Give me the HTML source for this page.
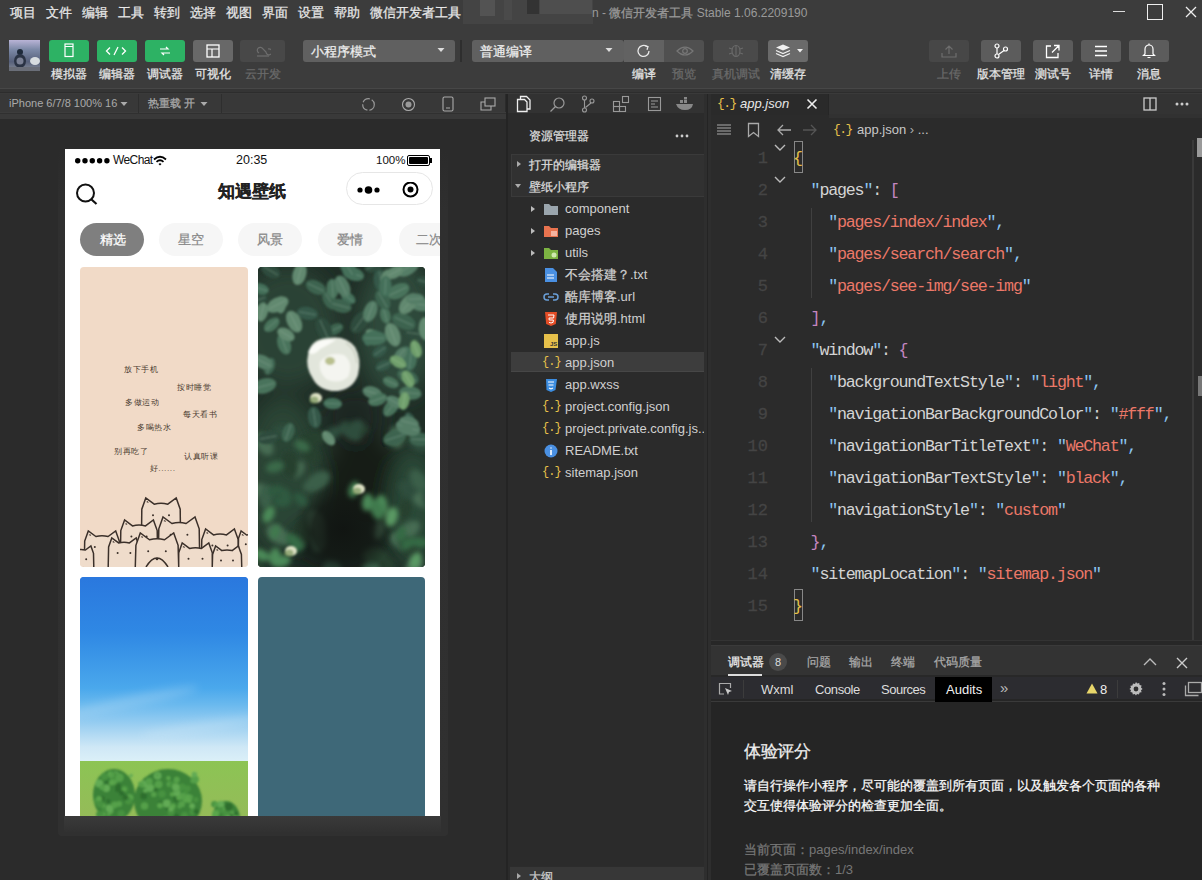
<!DOCTYPE html>
<html><head><meta charset="utf-8">
<style>
*{box-sizing:border-box;margin:0;padding:0}
html,body{width:1202px;height:880px;overflow:hidden;background:#2b2b2b;font-family:"Liberation Sans",sans-serif;}
.a{position:absolute}
.t{position:absolute;white-space:nowrap;line-height:1}
#menubar{left:0;top:0;width:1202px;height:88px;background:#3c3c3c}
.menu{top:6px;font-size:13px;color:#e8e8e8}
.btn{top:40px;height:22px;border-radius:3px;background:#5c5c5c}
.g{background:#2db264}
.lbl{top:68px;font-size:12px;color:#e6e6e6;text-align:center;width:60px}
.dim{color:#6a6a6a}
#simbar{left:0;top:94px;width:505px;height:25px;background:#383838}
#sim{left:0;top:119px;width:509px;height:761px;background:#2b2b2b}
#exp{left:509px;top:94px;width:195px;height:786px;background:#2b2b2b}
#ed{left:711px;top:94px;width:491px;height:551px;background:#2b2b2b}
.code{font-family:"Liberation Mono",monospace;font-size:16.6667px;letter-spacing:-1.2px;color:#d4d4d4}
.ln{font-family:"Liberation Mono",monospace;font-size:17px;color:#444;text-align:right;width:30px;-webkit-text-stroke:0.3px #444}
.b{color:#8cc4f0}
.s{color:#ec7868}
.q{color:#d4d4d4}
.tree{font-size:13px;color:#d0d0d0}
.c{display:inline-block;width:1em;text-align:center;font-style:normal;-webkit-text-stroke:0.25px currentColor}
.pk .c{width:calc(1em + 1px);-webkit-text-stroke:0}
.nocjk .c{position:relative;-webkit-text-fill-color:transparent;-webkit-text-stroke:0}
.nocjk .c::after{content:"";position:absolute;left:.1em;right:.1em;top:.12em;height:.8em;opacity:.85;--w:.09em;background:linear-gradient(currentColor,currentColor) 0 8%/100% var(--w) no-repeat,linear-gradient(currentColor,currentColor) 0 50%/100% var(--w) no-repeat,linear-gradient(currentColor,currentColor) 0 95%/100% var(--w) no-repeat,linear-gradient(currentColor,currentColor) 20% 0/var(--w) 100% no-repeat,linear-gradient(currentColor,currentColor) 75% 0/var(--w) 100% no-repeat}
.nocjk [style*="font-weight:bold"] .c::after{--w:.14em}
.nocjk .c.p::after{left:.15em;right:auto;width:.15em;top:.7em;height:.2em;background:currentColor}
</style></head><body>
<!-- top menubar + toolbar -->
<div class="a" id="menubar"></div>
<div class="t menu" style="left:10px"><i class="c">项</i><i class="c">目</i></div>
<div class="t menu" style="left:46px"><i class="c">文</i><i class="c">件</i></div>
<div class="t menu" style="left:82px"><i class="c">编</i><i class="c">辑</i></div>
<div class="t menu" style="left:118px"><i class="c">工</i><i class="c">具</i></div>
<div class="t menu" style="left:154px"><i class="c">转</i><i class="c">到</i></div>
<div class="t menu" style="left:190px"><i class="c">选</i><i class="c">择</i></div>
<div class="t menu" style="left:226px"><i class="c">视</i><i class="c">图</i></div>
<div class="t menu" style="left:262px"><i class="c">界</i><i class="c">面</i></div>
<div class="t menu" style="left:298px"><i class="c">设</i><i class="c">置</i></div>
<div class="t menu" style="left:334px"><i class="c">帮</i><i class="c">助</i></div>
<div class="t menu" style="left:370px"><i class="c">微</i><i class="c">信</i><i class="c">开</i><i class="c">发</i><i class="c">者</i><i class="c">工</i><i class="c">具</i></div>

<!-- blurred area -->
<div class="a" style="left:463px;top:0;width:130px;height:24px;background:#444"></div>
<div class="a" style="left:480px;top:0;width:15px;height:16px;background:#535353"></div><div class="a" style="left:504px;top:0;width:8px;height:20px;background:#4a4a4a"></div>
<div class="a" style="left:527px;top:0;width:12px;height:14px;background:#333"></div>
<div class="a" style="left:540px;top:0;width:52px;height:14px;background:#4e4e4e"></div>
<div class="t" style="left:592px;top:7px;font-size:12px;color:#9a9a9a">n - <i class="c">微</i><i class="c">信</i><i class="c">开</i><i class="c">发</i><i class="c">者</i><i class="c">工</i><i class="c">具</i> Stable 1.06.2209190</div>

<!-- window controls -->
<div class="a" style="left:1113px;top:11px;width:12px;height:1px;background:#ddd"></div>
<div class="a" style="left:1147px;top:4px;width:16px;height:16px;border:1.5px solid #eee"></div>
<svg class="a" style="left:1184px;top:5px" width="14" height="14"><path d="M2 2L12 12M12 2L2 12" stroke="#eee" stroke-width="1.3"/></svg>

<!-- toolbar -->
<svg class="a" style="left:9px;top:40px" width="31" height="31" viewBox="0 0 31 31"><defs><linearGradient id="av" x1="0" y1="0" x2="0" y2="1"><stop offset="0" stop-color="#b9b4d6"/><stop offset="0.3" stop-color="#7d8aa8"/><stop offset="0.7" stop-color="#56607a"/><stop offset="1" stop-color="#8a8f9a"/></linearGradient></defs><rect width="31" height="31" fill="url(#av)"/><circle cx="11" cy="12" r="3" fill="#1e2a3a"/><ellipse cx="11" cy="21" rx="6" ry="7" fill="#2a3344"/><circle cx="11" cy="21" r="3.5" fill="#7a8094"/><ellipse cx="26" cy="21" rx="5" ry="4" fill="#d8dde0"/><rect x="0" y="27" width="31" height="4" fill="#6a6e78"/></svg>
<div class="a btn g" style="left:49px;width:40px"></div>
<div class="a btn g" style="left:97px;width:40px"></div>
<div class="a btn g" style="left:145px;width:40px"></div>
<div class="a btn" style="left:193px;width:40px;background:#686868"></div>
<div class="a btn" style="left:240px;width:45px;background:#484848"></div>
<svg class="a" style="left:64px;top:43px" width="10" height="15"><rect x="1" y="1" width="8" height="12.5" stroke="#fff" stroke-width="1.2" fill="none"/><path d="M1 3.5h8" stroke="#fff" stroke-width="1"/></svg>
<svg class="a" style="left:105px;top:46px" width="22" height="10"><path d="M5 1.5L1.5 5 5 8.5M17 1.5L20.5 5 17 8.5M13 1L9 9" stroke="#fff" stroke-width="1.3" fill="none"/></svg>
<svg class="a" style="left:159px;top:46px" width="12" height="10"><path d="M1 3h8l-2-2M11 7H3l2 2" stroke="#fff" stroke-width="1.2" fill="none"/></svg>
<svg class="a" style="left:206px;top:44px" width="14" height="14"><rect x="1" y="1" width="12" height="12" stroke="#fff" stroke-width="1.3" fill="none"/><path d="M1 5h12M6 5v8" stroke="#fff" stroke-width="1.2"/></svg>
<svg class="a" style="left:255px;top:44px" width="16" height="14"><path d="M4 9a3 3 0 1 1 4-4l3 3a3 3 0 1 0 2-3" stroke="#6e6e6e" stroke-width="1.2" fill="none"/><path d="M2 12h12" stroke="#6e6e6e" stroke-width="1.2"/></svg>
<div class="t lbl" style="left:39px"><i class="c">模</i><i class="c">拟</i><i class="c">器</i></div>
<div class="t lbl" style="left:87px"><i class="c">编</i><i class="c">辑</i><i class="c">器</i></div>
<div class="t lbl" style="left:135px"><i class="c">调</i><i class="c">试</i><i class="c">器</i></div>
<div class="t lbl" style="left:183px"><i class="c">可</i><i class="c">视</i><i class="c">化</i></div>
<div class="t lbl dim" style="left:233px"><i class="c">云</i><i class="c">开</i><i class="c">发</i></div>

<div class="a btn" style="left:303px;width:152px;background:#606060"></div>
<div class="t" style="left:311px;top:45px;font-size:13px;color:#eee"><i class="c">小</i><i class="c">程</i><i class="c">序</i><i class="c">模</i><i class="c">式</i></div>
<div class="a" style="left:460px;top:40px;width:2px;height:22px;background:#2e2e2e"></div>
<div class="a btn" style="left:472px;width:152px;background:#606060"></div>
<div class="t" style="left:480px;top:45px;font-size:13px;color:#eee"><i class="c">普</i><i class="c">通</i><i class="c">编</i><i class="c">译</i></div>
<div class="a btn" style="left:624px;width:40px;background:#626262;border-radius:0"></div>
<div class="a btn" style="left:664px;width:40px;background:#505050;border-radius:0 3px 3px 0"></div>
<div class="a btn" style="left:713px;width:45px;background:#4a4a4a"></div>
<div class="a btn" style="left:768px;width:40px;background:#6a6a6a"></div>
<div class="t lbl" style="left:614px"><i class="c">编</i><i class="c">译</i></div>
<div class="t lbl dim" style="left:654px"><i class="c">预</i><i class="c">览</i></div>
<div class="t lbl dim" style="left:706px"><i class="c">真</i><i class="c">机</i><i class="c">调</i><i class="c">试</i></div>
<div class="t lbl" style="left:758px"><i class="c">清</i><i class="c">缓</i><i class="c">存</i></div>

<div class="a btn" style="left:929px;width:40px;background:#474747"></div>
<div class="a btn" style="left:981px;width:40px"></div>
<div class="a btn" style="left:1033px;width:40px"></div>
<div class="a btn" style="left:1081px;width:40px"></div>
<div class="a btn" style="left:1129px;width:40px"></div>
<div class="t lbl dim" style="left:919px"><i class="c">上</i><i class="c">传</i></div>
<div class="t lbl" style="left:971px"><i class="c">版</i><i class="c">本</i><i class="c">管</i><i class="c">理</i></div>
<div class="t lbl" style="left:1023px"><i class="c">测</i><i class="c">试</i><i class="c">号</i></div>
<div class="t lbl" style="left:1071px"><i class="c">详</i><i class="c">情</i></div>
<div class="t lbl" style="left:1119px"><i class="c">消</i><i class="c">息</i></div>

<svg class="a" style="left:437px;top:47px" width="8" height="6"><path d="M0.5 1h7L4 5z" fill="#ddd"/></svg>
<svg class="a" style="left:605px;top:47px" width="8" height="6"><path d="M0.5 1h7L4 5z" fill="#ddd"/></svg>
<svg class="a" style="left:636px;top:43px" width="16" height="16"><path d="M13 8a5.5 5.5 0 1 1-2-4.3" stroke="#e8e8e8" stroke-width="1.3" fill="none"/><path d="M9 2.5l3 1.2-1 3" stroke="#e8e8e8" stroke-width="1.3" fill="none"/></svg>
<svg class="a" style="left:676px;top:45px" width="18" height="12"><path d="M1 6q8-8 16 0q-8 8-16 0z" stroke="#777" stroke-width="1.2" fill="none"/><circle cx="9" cy="6" r="2.3" stroke="#777" stroke-width="1.2" fill="none"/></svg>
<svg class="a" style="left:728px;top:44px" width="16" height="14"><ellipse cx="8" cy="7" rx="4" ry="5.5" stroke="#6a6a6a" stroke-width="1.2" fill="none"/><path d="M1 4l3 1M1 10l3-1M15 4l-3 1M15 10l-3-1M8 2v10" stroke="#6a6a6a" stroke-width="1.1"/></svg>
<svg class="a" style="left:775px;top:43px" width="30" height="16"><path d="M8 1.5l7 3-7 3-7-3z" fill="#f0f0f0"/><path d="M1 7.5l7 3 7-3M1 10.5l7 3 7-3" stroke="#f0f0f0" stroke-width="1.3" fill="none"/><path d="M22 6h6l-3 3.5z" fill="#eee"/></svg>
<svg class="a" style="left:941px;top:44px" width="16" height="14"><path d="M8 10V2M4.5 5.5L8 2l3.5 3.5M1 9v4h14V9" stroke="#6e6e6e" stroke-width="1.2" fill="none"/></svg>
<svg class="a" style="left:993px;top:43px" width="16" height="16"><circle cx="4" cy="3" r="2" stroke="#fff" stroke-width="1.2" fill="none"/><circle cx="4" cy="13" r="2" stroke="#fff" stroke-width="1.2" fill="none"/><circle cx="12.5" cy="6" r="2" stroke="#fff" stroke-width="1.2" fill="none"/><path d="M4 5v6M11 7.5L5.5 11.5" stroke="#fff" stroke-width="1.2" fill="none"/></svg>
<svg class="a" style="left:1045px;top:44px" width="16" height="15"><path d="M6 2H1.5v11.5H13V9M9 1.5h5v5M14 1.5L7 8.5" stroke="#fff" stroke-width="1.3" fill="none"/></svg>
<svg class="a" style="left:1094px;top:45px" width="14" height="12"><path d="M1 1.5h12M1 6h12M1 10.5h12" stroke="#fff" stroke-width="1.3"/></svg>
<svg class="a" style="left:1142px;top:42px" width="14" height="17"><path d="M3 12V7a4 4 0 0 1 8 0v5l1.5 1.5h-11z" stroke="#fff" stroke-width="1.2" fill="none"/><path d="M7 1.5v1.5M5.5 15.5h3" stroke="#fff" stroke-width="1.2"/></svg>
<!-- simulator toolbar -->
<div class="a" style="left:0;top:88px;width:1202px;height:1px;background:#474747"></div><div class="a" style="left:0;top:89px;width:1202px;height:3px;background:#353535"></div><div class="a" style="left:0;top:92px;width:1202px;height:1px;background:#2d2d2d"></div><div class="a" style="left:0;top:93px;width:1202px;height:1px;background:#3a3a3a"></div><div class="a" id="simbar"></div><div class="a" style="left:0;top:112px;width:506px;height:1px;background:#3c3c3c"></div><div class="a" style="left:0;top:113px;width:506px;height:1px;background:#303030"></div><div class="a" style="left:0;top:114px;width:506px;height:5px;background:#393939"></div>
<div class="t" style="left:9px;top:98px;font-size:11px;color:#aaa">iPhone 6/7/8 100% 16</div><svg class="a" style="left:120px;top:101px" width="8" height="6"><path d="M0.5 1h7L4 5z" fill="#aaa"/></svg>
<div class="a" style="left:138px;top:94px;width:1px;height:19px;background:#2e2e2e"></div>
<div class="t" style="left:148px;top:98px;font-size:11px;color:#aaa"><i class="c">热</i><i class="c">重</i><i class="c">载</i> <i class="c">开</i></div><svg class="a" style="left:200px;top:101px" width="8" height="6"><path d="M0.5 1h7L4 5z" fill="#aaa"/></svg>
<div class="a" style="left:221px;top:94px;width:1px;height:19px;background:#2e2e2e"></div>

<div class="a" id="sim"></div>
<svg class="a" style="left:361px;top:97px" width="15" height="15"><circle cx="7.5" cy="7.5" r="5.8" stroke="#999" stroke-width="1.2" fill="none" stroke-dasharray="8 2"/></svg>
<svg class="a" style="left:401px;top:97px" width="15" height="15"><circle cx="7.5" cy="7.5" r="6" stroke="#aaa" stroke-width="1.1" fill="none"/><circle cx="7.5" cy="7.5" r="3" fill="#999"/></svg>
<svg class="a" style="left:442px;top:96px" width="12" height="16"><rect x="1" y="1" width="10" height="14" rx="1.5" stroke="#aaa" stroke-width="1.1" fill="none"/><path d="M4 12h4" stroke="#aaa"/></svg>
<svg class="a" style="left:480px;top:97px" width="16" height="15"><rect x="5" y="1" width="10" height="8" stroke="#aaa" stroke-width="1.1" fill="none"/><path d="M5 5H1v8h10v-4" stroke="#aaa" stroke-width="1.1" fill="none"/></svg>
<div class="a" style="left:506px;top:94px;width:2px;height:786px;background:#242424"></div>
<!-- phone shadow -->
<div class="a" style="left:58px;top:150px;width:390px;height:686px;background:linear-gradient(#2b2b2b,#2f2f2f 60px,#303030);border-radius:4px"></div>
<div class="a" style="left:64px;top:816px;width:377px;height:16px;background:linear-gradient(#3a3a3a,#313131)"></div>
<!-- phone -->
<div class="a" id="phone" style="left:65px;top:149px;width:375px;height:667px;background:#fff;overflow:hidden">
  <svg class="a" style="left:10px;top:8px" width="36" height="8" viewBox="0 0 36 8"><circle cx="2.7" cy="3.7" r="2.7"/><circle cx="10" cy="3.7" r="2.7"/><circle cx="17.3" cy="3.7" r="2.7"/><circle cx="24.6" cy="3.7" r="2.7"/><circle cx="31.9" cy="3.7" r="2.7"/></svg>
  <div class="t" style="left:48px;top:5px;font-size:12px;color:#111;letter-spacing:-0.6px">WeChat</div>
  <svg class="a" style="left:88px;top:6px" width="14" height="11" viewBox="0 0 14 11"><path d="M1 4.5Q7 -1 13 4.5" stroke="#000" stroke-width="1.8" fill="none"/><path d="M3.5 6.8Q7 3.6 10.5 6.8" stroke="#000" stroke-width="1.8" fill="none"/><path d="M5.5 9L7 10.5L8.5 9Q7 7.7 5.5 9Z" fill="#000"/></svg>
  <div class="t" style="left:171px;top:5px;font-size:12.5px;color:#111">20:35</div>
  <div class="t" style="left:311px;top:6px;font-size:11.5px;color:#111">100%</div>
  <div class="a" style="left:342px;top:6px;width:23px;height:11px;border:1px solid #000;border-radius:2px;padding:1px"><div style="width:100%;height:100%;background:#000;border-radius:1px"></div></div>
  <div class="a" style="left:365px;top:9px;width:2px;height:5px;background:#000"></div>
  <!-- nav -->
  <svg class="a" style="left:10px;top:34px" width="24" height="24" viewBox="0 0 24 24"><circle cx="10.5" cy="10" r="8.5" stroke="#111" stroke-width="2" fill="none"/><path d="M16.5 16.5L21.5 21" stroke="#111" stroke-width="2.2"/></svg>
  <div class="t" style="left:153px;top:34px;font-size:17px;font-weight:bold;color:#222"><i class="c">知</i><i class="c">遇</i><i class="c">壁</i><i class="c">纸</i></div>
  <div class="a" style="left:281px;top:23px;width:87px;height:33px;border:1px solid #e6e6e6;border-radius:17px"></div>
  <svg class="a" style="left:290px;top:33px" width="80" height="16" viewBox="0 0 80 16"><circle cx="5" cy="8" r="2.6" fill="#000"/><circle cx="13.5" cy="8" r="3.8" fill="#000"/><circle cx="22" cy="8" r="2.6" fill="#000"/><circle cx="55.5" cy="7.5" r="7" stroke="#000" stroke-width="2" fill="none"/><circle cx="55.5" cy="7.5" r="3" fill="#000"/></svg>
  <!-- tabs -->
  <div class="a" style="left:15px;top:74px;width:64px;height:33px;border-radius:17px;background:#7f7f7f"></div>
  <div class="t" style="left:35px;top:84px;font-size:13px;color:#fff"><i class="c">精</i><i class="c">选</i></div>
  <div class="a" style="left:94px;top:74px;width:64px;height:33px;border-radius:17px;background:#f6f6f6"></div>
  <div class="t" style="left:113px;top:84px;font-size:13px;color:#888"><i class="c">星</i><i class="c">空</i></div>
  <div class="a" style="left:173px;top:74px;width:64px;height:33px;border-radius:17px;background:#f6f6f6"></div>
  <div class="t" style="left:192px;top:84px;font-size:13px;color:#888"><i class="c">风</i><i class="c">景</i></div>
  <div class="a" style="left:253px;top:74px;width:64px;height:33px;border-radius:17px;background:#f6f6f6"></div>
  <div class="t" style="left:272px;top:84px;font-size:13px;color:#888"><i class="c">爱</i><i class="c">情</i></div>
  <div class="a" style="left:334px;top:74px;width:64px;height:33px;border-radius:17px;background:#f6f6f6"></div>
  <div class="t" style="left:351px;top:84px;font-size:13px;color:#888"><i class="c">二</i><i class="c">次</i></div>
  <!-- img 1 peach -->
  <div class="a" id="im1" style="left:15px;top:118px;width:168px;height:300px;border-radius:4px;background:#f1dac7;overflow:hidden"><div class="t pk" style="left:44px;top:99px;font-size:7.5px;letter-spacing:1px;color:#4a3a30;font-family:'Liberation Serif',serif"><i class="c">放</i><i class="c">下</i><i class="c">手</i><i class="c">机</i></div><div class="t pk" style="left:97px;top:117px;font-size:7.5px;letter-spacing:1px;color:#4a3a30;font-family:'Liberation Serif',serif"><i class="c">按</i><i class="c">时</i><i class="c">睡</i><i class="c">觉</i></div><div class="t pk" style="left:45px;top:132px;font-size:7.5px;letter-spacing:1px;color:#4a3a30;font-family:'Liberation Serif',serif"><i class="c">多</i><i class="c">做</i><i class="c">运</i><i class="c">动</i></div><div class="t pk" style="left:103px;top:144px;font-size:7.5px;letter-spacing:1px;color:#4a3a30;font-family:'Liberation Serif',serif"><i class="c">每</i><i class="c">天</i><i class="c">看</i><i class="c">书</i></div><div class="t pk" style="left:57px;top:157px;font-size:7.5px;letter-spacing:1px;color:#4a3a30;font-family:'Liberation Serif',serif"><i class="c">多</i><i class="c">喝</i><i class="c">热</i><i class="c">水</i></div><div class="t pk" style="left:34px;top:181px;font-size:7.5px;letter-spacing:1px;color:#4a3a30;font-family:'Liberation Serif',serif"><i class="c">别</i><i class="c">再</i><i class="c">吃</i><i class="c">了</i></div><div class="t pk" style="left:104px;top:186px;font-size:7.5px;letter-spacing:1px;color:#4a3a30;font-family:'Liberation Serif',serif"><i class="c">认</i><i class="c">真</i><i class="c">听</i><i class="c">课</i></div><div class="t pk" style="left:70px;top:198px;font-size:7.5px;letter-spacing:1px;color:#4a3a30;font-family:'Liberation Serif',serif"><i class="c">好</i>......</div><svg width="168" height="300" viewBox="0 0 168 300" style="position:absolute;left:0;top:0"><path d="M61.0 310 L61.8 242.2 L65.8 231.0 L74.2 237.2 Q81.0 235.5 87.8 237.2 L96.2 231.0 L100.2 242.2 L101.0 310" fill="#efdccb" stroke="#3b302a" stroke-width="1.5"/><circle cx="73.0" cy="248.2" r="1" fill="#3b302a"/><circle cx="89.0" cy="248.2" r="1" fill="#3b302a"/><path d="M66.2 235.0l1.5 -1 1 2z" fill="#3b302a"/><path d="M40.0 310 L40.8 263.6 L44.6 253.0 L52.5 258.9 Q59.0 257.3 65.5 258.9 L73.4 253.0 L77.2 263.6 L78.0 310" fill="#efdccb" stroke="#3b302a" stroke-width="1.5"/><circle cx="51.4" cy="269.6" r="1" fill="#3b302a"/><circle cx="66.6" cy="269.6" r="1" fill="#3b302a"/><path d="M44.9 257.0l1.5 -1 1 2z" fill="#3b302a"/><path d="M78.0 310 L78.8 261.8 L83.0 250.0 L91.9 256.5 Q99.0 254.7 106.1 256.5 L115.0 250.0 L119.2 261.8 L120.0 310" fill="#efdccb" stroke="#3b302a" stroke-width="1.5"/><circle cx="90.6" cy="267.8" r="1" fill="#3b302a"/><circle cx="107.4" cy="267.8" r="1" fill="#3b302a"/><path d="M83.5 254.0l1.5 -1 1 2z" fill="#3b302a"/><path d="M4.0 310 L4.7 274.1 L8.3 264.0 L15.9 269.5 Q22.0 268.0 28.1 269.5 L35.7 264.0 L39.3 274.1 L40.0 310" fill="#efdccb" stroke="#3b302a" stroke-width="1.5"/><circle cx="14.8" cy="280.1" r="1" fill="#3b302a"/><circle cx="29.2" cy="280.1" r="1" fill="#3b302a"/><path d="M8.7 268.0l1.5 -1 1 2z" fill="#3b302a"/><path d="M121.0 310 L121.8 272.6 L125.6 262.0 L133.5 267.9 Q140.0 266.3 146.5 267.9 L154.4 262.0 L158.2 272.6 L159.0 310" fill="#efdccb" stroke="#3b302a" stroke-width="1.5"/><circle cx="132.4" cy="278.6" r="1" fill="#3b302a"/><circle cx="147.6" cy="278.6" r="1" fill="#3b302a"/><path d="M125.9 266.0l1.5 -1 1 2z" fill="#3b302a"/><path d="M158.0 310 L158.5 271.3 L161.1 264.0 L166.6 268.0 Q171.0 266.9 175.4 268.0 L180.9 264.0 L183.5 271.3 L184.0 310" fill="#efdccb" stroke="#3b302a" stroke-width="1.5"/><circle cx="165.8" cy="277.3" r="1" fill="#3b302a"/><circle cx="176.2" cy="277.3" r="1" fill="#3b302a"/><path d="M161.4 268.0l1.5 -1 1 2z" fill="#3b302a"/><path d="M-12.0 310 L-11.5 286.3 L-8.9 279.0 L-3.4 283.0 Q1.0 281.9 5.4 283.0 L10.9 279.0 L13.5 286.3 L14.0 310" fill="#efdccb" stroke="#3b302a" stroke-width="1.5"/><circle cx="-4.2" cy="292.3" r="1" fill="#3b302a"/><circle cx="6.2" cy="292.3" r="1" fill="#3b302a"/><path d="M-8.6 283.0l1.5 -1 1 2z" fill="#3b302a"/><path d="M28.0 310 L28.6 280.0 L31.8 271.0 L38.6 275.9 Q44.0 274.6 49.4 275.9 L56.2 271.0 L59.4 280.0 L60.0 310" fill="#efdccb" stroke="#3b302a" stroke-width="1.5"/><circle cx="37.6" cy="286.0" r="1" fill="#3b302a"/><circle cx="50.4" cy="286.0" r="1" fill="#3b302a"/><path d="M32.2 275.0l1.5 -1 1 2z" fill="#3b302a"/><path d="M98.0 310 L98.7 285.8 L102.2 276.0 L109.5 281.4 Q115.5 279.9 121.5 281.4 L128.8 276.0 L132.3 285.8 L133.0 310" fill="#efdccb" stroke="#3b302a" stroke-width="1.5"/><circle cx="108.5" cy="291.8" r="1" fill="#3b302a"/><circle cx="122.5" cy="291.8" r="1" fill="#3b302a"/><path d="M102.5 280.0l1.5 -1 1 2z" fill="#3b302a"/><path d="M132.0 310 L132.6 287.4 L135.6 279.0 L141.9 283.6 Q147.0 282.4 152.1 283.6 L158.4 279.0 L161.4 287.4 L162.0 310" fill="#efdccb" stroke="#3b302a" stroke-width="1.5"/><circle cx="141.0" cy="293.4" r="1" fill="#3b302a"/><circle cx="153.0" cy="293.4" r="1" fill="#3b302a"/><path d="M135.9 283.0l1.5 -1 1 2z" fill="#3b302a"/><path d="M55.0 310 L55.9 278.3 L60.3 266.0 L69.5 272.8 Q77.0 270.9 84.5 272.8 L93.7 266.0 L98.1 278.3 L99.0 310" fill="#efdccb" stroke="#3b302a" stroke-width="1.5"/><circle cx="68.2" cy="284.3" r="1" fill="#3b302a"/><circle cx="85.8" cy="284.3" r="1" fill="#3b302a"/><path d="M60.7 270.0l1.5 -1 1 2z" fill="#3b302a"/><path d="M66 300 Q77 282 88 300" fill="none" stroke="#3b302a" stroke-width="1.5"/><circle cx="77" cy="292" r="1.3" fill="#3b302a"/></svg></div>
  <!-- img 2 rose -->
  <div class="a" id="im2" style="left:193px;top:118px;width:167px;height:300px;border-radius:4px;background:#1f3526;overflow:hidden"><svg width="167" height="300" viewBox="0 0 167 300" style="position:absolute;left:0;top:0"><defs><filter id="bl2" x="-30%" y="-30%" width="160%" height="160%"><feGaussianBlur stdDeviation="2.6"/></filter><filter id="bl1" x="-10%" y="-10%" width="120%" height="120%"><feGaussianBlur stdDeviation="0.9"/></filter><filter id="bl5" x="-50%" y="-50%" width="200%" height="200%"><feGaussianBlur stdDeviation="10"/></filter></defs><rect width="167" height="300" fill="#1f2e26"/><g filter="url(#bl5)"><ellipse cx="30" cy="60" rx="50" ry="60" fill="#2b4236"/><ellipse cx="140" cy="60" rx="40" ry="70" fill="#2e4a3a"/><ellipse cx="25" cy="210" rx="40" ry="80" fill="#2a4434"/><ellipse cx="105" cy="220" rx="40" ry="55" fill="#141a16"/><ellipse cx="80" cy="280" rx="50" ry="30" fill="#18201b"/><ellipse cx="155" cy="240" rx="25" ry="60" fill="#2c4837"/><ellipse cx="95" cy="150" rx="30" ry="30" fill="#1c2620"/></g><g filter="url(#bl2)"><ellipse cx="151.9" cy="223.4" rx="12.6" ry="7.6" transform="rotate(34 151.9 223.4)" fill="#2f4e3c"/><ellipse cx="157.5" cy="299.8" rx="9.4" ry="5.7" transform="rotate(64 157.5 299.8)" fill="#3b5f48"/><ellipse cx="130.8" cy="300.5" rx="9.9" ry="6.0" transform="rotate(96 130.8 300.5)" fill="#27402f"/><ellipse cx="113.7" cy="301.4" rx="9.9" ry="5.9" transform="rotate(10 113.7 301.4)" fill="#3b5f48"/><ellipse cx="53.5" cy="217.4" rx="9.4" ry="5.6" transform="rotate(148 53.5 217.4)" fill="#3b5f48"/><ellipse cx="75.4" cy="299.9" rx="9.2" ry="5.5" transform="rotate(31 75.4 299.9)" fill="#3b5f48"/><ellipse cx="151.3" cy="263.1" rx="12.2" ry="7.3" transform="rotate(143 151.3 263.1)" fill="#466c52"/><ellipse cx="144.6" cy="274.5" rx="13.6" ry="8.2" transform="rotate(27 144.6 274.5)" fill="#466c52"/><ellipse cx="0.9" cy="304.9" rx="9.7" ry="5.8" transform="rotate(75 0.9 304.9)" fill="#3b5f48"/><ellipse cx="61.2" cy="271.9" rx="13.2" ry="7.9" transform="rotate(97 61.2 271.9)" fill="#3b5f48"/><ellipse cx="159.9" cy="175.0" rx="13.3" ry="8.0" transform="rotate(36 159.9 175.0)" fill="#2f4e3c"/><ellipse cx="40.1" cy="202.8" rx="9.1" ry="5.4" transform="rotate(120 40.1 202.8)" fill="#466c52"/><ellipse cx="160.7" cy="213.7" rx="12.2" ry="7.3" transform="rotate(58 160.7 213.7)" fill="#3b5f48"/><ellipse cx="92.9" cy="164.2" rx="12.7" ry="7.6" transform="rotate(38 92.9 164.2)" fill="#2f4e3c"/><ellipse cx="32.3" cy="197.5" rx="13.4" ry="8.0" transform="rotate(79 32.3 197.5)" fill="#27402f"/><ellipse cx="119.9" cy="262.8" rx="9.3" ry="5.6" transform="rotate(103 119.9 262.8)" fill="#466c52"/><ellipse cx="59.4" cy="256.1" rx="13.5" ry="8.1" transform="rotate(63 59.4 256.1)" fill="#466c52"/><ellipse cx="1.0" cy="301.2" rx="10.6" ry="6.3" transform="rotate(82 1.0 301.2)" fill="#27402f"/><ellipse cx="72.2" cy="301.9" rx="11.1" ry="6.7" transform="rotate(137 72.2 301.9)" fill="#2f4e3c"/><ellipse cx="150.8" cy="279.0" rx="12.4" ry="7.4" transform="rotate(40 150.8 279.0)" fill="#27402f"/><ellipse cx="59.6" cy="214.3" rx="14.0" ry="8.4" transform="rotate(145 59.6 214.3)" fill="#3b5f48"/><ellipse cx="6.3" cy="177.1" rx="12.6" ry="7.6" transform="rotate(58 6.3 177.1)" fill="#466c52"/><ellipse cx="-1.6" cy="223.1" rx="11.0" ry="6.6" transform="rotate(170 -1.6 223.1)" fill="#466c52"/><ellipse cx="24.9" cy="164.3" rx="10.5" ry="6.3" transform="rotate(1 24.9 164.3)" fill="#2f4e3c"/><ellipse cx="99.9" cy="160.8" rx="11.2" ry="6.7" transform="rotate(18 99.9 160.8)" fill="#27402f"/><ellipse cx="117.3" cy="288.6" rx="13.9" ry="8.3" transform="rotate(13 117.3 288.6)" fill="#27402f"/><ellipse cx="20.5" cy="268.0" rx="13.4" ry="8.1" transform="rotate(36 20.5 268.0)" fill="#466c52"/><ellipse cx="45.3" cy="265.8" rx="13.0" ry="7.8" transform="rotate(91 45.3 265.8)" fill="#27402f"/><ellipse cx="168.4" cy="233.4" rx="13.3" ry="8.0" transform="rotate(11 168.4 233.4)" fill="#466c52"/><ellipse cx="140.3" cy="171.8" rx="12.8" ry="7.7" transform="rotate(151 140.3 171.8)" fill="#27402f"/><ellipse cx="8.1" cy="229.3" rx="11.9" ry="7.2" transform="rotate(96 8.1 229.3)" fill="#3b5f48"/><ellipse cx="170.6" cy="230.9" rx="11.1" ry="6.6" transform="rotate(89 170.6 230.9)" fill="#2f4e3c"/><ellipse cx="97.2" cy="161.8" rx="10.4" ry="6.3" transform="rotate(126 97.2 161.8)" fill="#2f4e3c"/><ellipse cx="147.2" cy="242.6" rx="10.3" ry="6.2" transform="rotate(100 147.2 242.6)" fill="#27402f"/><ellipse cx="-3.8" cy="286.6" rx="11.6" ry="6.9" transform="rotate(80 -3.8 286.6)" fill="#27402f"/><ellipse cx="52.4" cy="185.5" rx="12.5" ry="7.5" transform="rotate(57 52.4 185.5)" fill="#27402f"/><ellipse cx="53.6" cy="171.9" rx="12.9" ry="7.7" transform="rotate(167 53.6 171.9)" fill="#27402f"/><ellipse cx="155.9" cy="299.3" rx="10.3" ry="6.2" transform="rotate(143 155.9 299.3)" fill="#466c52"/><ellipse cx="138.1" cy="170.1" rx="11.1" ry="6.6" transform="rotate(81 138.1 170.1)" fill="#466c52"/><ellipse cx="75.0" cy="166.1" rx="10.0" ry="6.0" transform="rotate(150 75.0 166.1)" fill="#2f4e3c"/></g><g filter="url(#bl1)"><ellipse cx="77.0" cy="62.2" rx="8.7" ry="5.2" transform="rotate(156 77.0 62.2)" fill="#3d6450"/><path d="M70.0 62.2H83.9" transform="rotate(156 77.0 62.2)" stroke="#8fb09c" stroke-width="0.8" opacity="0.5"/><ellipse cx="102.0" cy="55.1" rx="12.7" ry="7.6" transform="rotate(126 102.0 55.1)" fill="#2e4c3d"/><path d="M91.9 55.1H112.2" transform="rotate(126 102.0 55.1)" stroke="#8fb09c" stroke-width="0.8" opacity="0.5"/><ellipse cx="22.8" cy="37.8" rx="8.6" ry="5.1" transform="rotate(91 22.8 37.8)" fill="#62896f"/><path d="M16.0 37.8H29.7" transform="rotate(91 22.8 37.8)" stroke="#8fb09c" stroke-width="0.8" opacity="0.5"/><ellipse cx="6.2" cy="118.9" rx="12.4" ry="7.5" transform="rotate(165 6.2 118.9)" fill="#4a735c"/><path d="M-3.7 118.9H16.2" transform="rotate(165 6.2 118.9)" stroke="#8fb09c" stroke-width="0.8" opacity="0.5"/><ellipse cx="114.3" cy="125.6" rx="10.1" ry="6.1" transform="rotate(16 114.3 125.6)" fill="#557d66"/><path d="M106.3 125.6H122.4" transform="rotate(16 114.3 125.6)" stroke="#8fb09c" stroke-width="0.8" opacity="0.5"/><ellipse cx="156.3" cy="66.4" rx="9.7" ry="5.8" transform="rotate(8 156.3 66.4)" fill="#2e4c3d"/><path d="M148.5 66.4H164.1" transform="rotate(8 156.3 66.4)" stroke="#8fb09c" stroke-width="0.8" opacity="0.5"/><ellipse cx="151.9" cy="153.3" rx="8.3" ry="5.0" transform="rotate(68 151.9 153.3)" fill="#35594a"/><path d="M145.3 153.3H158.5" transform="rotate(68 151.9 153.3)" stroke="#8fb09c" stroke-width="0.8" opacity="0.5"/><ellipse cx="19.6" cy="37.6" rx="11.7" ry="7.0" transform="rotate(153 19.6 37.6)" fill="#62896f"/><path d="M10.3 37.6H29.0" transform="rotate(153 19.6 37.6)" stroke="#8fb09c" stroke-width="0.8" opacity="0.5"/><ellipse cx="145.8" cy="54.4" rx="12.5" ry="7.5" transform="rotate(24 145.8 54.4)" fill="#3d6450"/><path d="M135.9 54.4H155.8" transform="rotate(24 145.8 54.4)" stroke="#8fb09c" stroke-width="0.8" opacity="0.5"/><ellipse cx="90.2" cy="30.7" rx="8.3" ry="5.0" transform="rotate(35 90.2 30.7)" fill="#44705a"/><path d="M83.5 30.7H96.8" transform="rotate(35 90.2 30.7)" stroke="#8fb09c" stroke-width="0.8" opacity="0.5"/><ellipse cx="11.5" cy="99.4" rx="8.9" ry="5.3" transform="rotate(110 11.5 99.4)" fill="#3d6450"/><path d="M4.4 99.4H18.6" transform="rotate(110 11.5 99.4)" stroke="#8fb09c" stroke-width="0.8" opacity="0.5"/><ellipse cx="4.6" cy="94.9" rx="11.0" ry="6.6" transform="rotate(27 4.6 94.9)" fill="#557d66"/><path d="M-4.2 94.9H13.4" transform="rotate(27 4.6 94.9)" stroke="#8fb09c" stroke-width="0.8" opacity="0.5"/><ellipse cx="125.4" cy="98.6" rx="8.2" ry="4.9" transform="rotate(156 125.4 98.6)" fill="#35594a"/><path d="M118.9 98.6H132.0" transform="rotate(156 125.4 98.6)" stroke="#8fb09c" stroke-width="0.8" opacity="0.5"/><ellipse cx="163.3" cy="37.6" rx="11.1" ry="6.6" transform="rotate(8 163.3 37.6)" fill="#557d66"/><path d="M154.5 37.6H172.2" transform="rotate(8 163.3 37.6)" stroke="#8fb09c" stroke-width="0.8" opacity="0.5"/><ellipse cx="144.7" cy="89.0" rx="10.8" ry="6.5" transform="rotate(124 144.7 89.0)" fill="#44705a"/><path d="M136.0 89.0H153.3" transform="rotate(124 144.7 89.0)" stroke="#8fb09c" stroke-width="0.8" opacity="0.5"/><ellipse cx="56.5" cy="150.5" rx="10.9" ry="6.6" transform="rotate(81 56.5 150.5)" fill="#35594a"/><path d="M47.7 150.5H65.2" transform="rotate(81 56.5 150.5)" stroke="#8fb09c" stroke-width="0.8" opacity="0.5"/><ellipse cx="30.2" cy="165.4" rx="9.9" ry="5.9" transform="rotate(109 30.2 165.4)" fill="#3d6450"/><path d="M22.3 165.4H38.1" transform="rotate(109 30.2 165.4)" stroke="#8fb09c" stroke-width="0.8" opacity="0.5"/><ellipse cx="71.7" cy="33.4" rx="10.2" ry="6.1" transform="rotate(58 71.7 33.4)" fill="#3d6450"/><path d="M63.6 33.4H79.9" transform="rotate(58 71.7 33.4)" stroke="#8fb09c" stroke-width="0.8" opacity="0.5"/><ellipse cx="49.4" cy="46.3" rx="10.6" ry="6.4" transform="rotate(10 49.4 46.3)" fill="#35594a"/><path d="M40.9 46.3H57.8" transform="rotate(10 49.4 46.3)" stroke="#8fb09c" stroke-width="0.8" opacity="0.5"/><ellipse cx="133.2" cy="140.4" rx="10.5" ry="6.3" transform="rotate(128 133.2 140.4)" fill="#4a735c"/><path d="M124.8 140.4H141.6" transform="rotate(128 133.2 140.4)" stroke="#8fb09c" stroke-width="0.8" opacity="0.5"/><ellipse cx="95.2" cy="6.9" rx="11.2" ry="6.7" transform="rotate(17 95.2 6.9)" fill="#44705a"/><path d="M86.2 6.9H104.2" transform="rotate(17 95.2 6.9)" stroke="#8fb09c" stroke-width="0.8" opacity="0.5"/><ellipse cx="66.0" cy="62.1" rx="12.3" ry="7.4" transform="rotate(66 66.0 62.1)" fill="#2e4c3d"/><path d="M56.1 62.1H75.8" transform="rotate(66 66.0 62.1)" stroke="#8fb09c" stroke-width="0.8" opacity="0.5"/><ellipse cx="150.0" cy="0.3" rx="12.7" ry="7.6" transform="rotate(146 150.0 0.3)" fill="#557d66"/><path d="M139.8 0.3H160.1" transform="rotate(146 150.0 0.3)" stroke="#8fb09c" stroke-width="0.8" opacity="0.5"/><ellipse cx="162.5" cy="172.5" rx="11.0" ry="6.6" transform="rotate(2 162.5 172.5)" fill="#3d6450"/><path d="M153.7 172.5H171.4" transform="rotate(2 162.5 172.5)" stroke="#8fb09c" stroke-width="0.8" opacity="0.5"/><ellipse cx="74.7" cy="136.6" rx="9.5" ry="5.7" transform="rotate(3 74.7 136.6)" fill="#44705a"/><path d="M67.2 136.6H82.3" transform="rotate(3 74.7 136.6)" stroke="#8fb09c" stroke-width="0.8" opacity="0.5"/><ellipse cx="57.8" cy="20.3" rx="10.8" ry="6.5" transform="rotate(25 57.8 20.3)" fill="#3d6450"/><path d="M49.1 20.3H66.4" transform="rotate(25 57.8 20.3)" stroke="#8fb09c" stroke-width="0.8" opacity="0.5"/><ellipse cx="127.3" cy="48.3" rx="8.6" ry="5.2" transform="rotate(76 127.3 48.3)" fill="#4a735c"/><path d="M120.4 48.3H134.2" transform="rotate(76 127.3 48.3)" stroke="#8fb09c" stroke-width="0.8" opacity="0.5"/><ellipse cx="119.6" cy="132.6" rx="9.9" ry="5.9" transform="rotate(160 119.6 132.6)" fill="#4a735c"/><path d="M111.6 132.6H127.5" transform="rotate(160 119.6 132.6)" stroke="#8fb09c" stroke-width="0.8" opacity="0.5"/><ellipse cx="112.4" cy="44.3" rx="11.0" ry="6.6" transform="rotate(110 112.4 44.3)" fill="#557d66"/><path d="M103.6 44.3H121.2" transform="rotate(110 112.4 44.3)" stroke="#8fb09c" stroke-width="0.8" opacity="0.5"/><ellipse cx="12.6" cy="3.7" rx="10.6" ry="6.4" transform="rotate(31 12.6 3.7)" fill="#2e4c3d"/><path d="M4.0 3.7H21.1" transform="rotate(31 12.6 3.7)" stroke="#8fb09c" stroke-width="0.8" opacity="0.5"/><ellipse cx="140.2" cy="24.2" rx="11.9" ry="7.2" transform="rotate(155 140.2 24.2)" fill="#4a735c"/><path d="M130.6 24.2H149.8" transform="rotate(155 140.2 24.2)" stroke="#8fb09c" stroke-width="0.8" opacity="0.5"/><ellipse cx="26.1" cy="77.2" rx="10.8" ry="6.5" transform="rotate(70 26.1 77.2)" fill="#4a735c"/><path d="M17.5 77.2H34.8" transform="rotate(70 26.1 77.2)" stroke="#8fb09c" stroke-width="0.8" opacity="0.5"/><ellipse cx="41.5" cy="7.0" rx="11.3" ry="6.8" transform="rotate(105 41.5 7.0)" fill="#62896f"/><path d="M32.4 7.0H50.5" transform="rotate(105 41.5 7.0)" stroke="#8fb09c" stroke-width="0.8" opacity="0.5"/><ellipse cx="152.4" cy="93.0" rx="10.6" ry="6.4" transform="rotate(97 152.4 93.0)" fill="#44705a"/><path d="M143.9 93.0H160.8" transform="rotate(97 152.4 93.0)" stroke="#8fb09c" stroke-width="0.8" opacity="0.5"/><ellipse cx="122.6" cy="13.6" rx="11.5" ry="6.9" transform="rotate(82 122.6 13.6)" fill="#35594a"/><path d="M113.4 13.6H131.8" transform="rotate(82 122.6 13.6)" stroke="#8fb09c" stroke-width="0.8" opacity="0.5"/><ellipse cx="152.3" cy="126.0" rx="11.4" ry="6.8" transform="rotate(5 152.3 126.0)" fill="#4a735c"/><path d="M143.2 126.0H161.4" transform="rotate(5 152.3 126.0)" stroke="#8fb09c" stroke-width="0.8" opacity="0.5"/><ellipse cx="150.5" cy="36.6" rx="12.1" ry="7.3" transform="rotate(131 150.5 36.6)" fill="#62896f"/><path d="M140.8 36.6H160.2" transform="rotate(131 150.5 36.6)" stroke="#8fb09c" stroke-width="0.8" opacity="0.5"/><ellipse cx="82.8" cy="38.8" rx="11.1" ry="6.7" transform="rotate(15 82.8 38.8)" fill="#3d6450"/><path d="M73.9 38.8H91.7" transform="rotate(15 82.8 38.8)" stroke="#8fb09c" stroke-width="0.8" opacity="0.5"/><ellipse cx="115.0" cy="68.2" rx="8.3" ry="5.0" transform="rotate(34 115.0 68.2)" fill="#62896f"/><path d="M108.3 68.2H121.7" transform="rotate(34 115.0 68.2)" stroke="#8fb09c" stroke-width="0.8" opacity="0.5"/><ellipse cx="128.2" cy="10.2" rx="8.1" ry="4.9" transform="rotate(112 128.2 10.2)" fill="#62896f"/><path d="M121.7 10.2H134.7" transform="rotate(112 128.2 10.2)" stroke="#8fb09c" stroke-width="0.8" opacity="0.5"/><ellipse cx="89.8" cy="-0.3" rx="11.9" ry="7.1" transform="rotate(60 89.8 -0.3)" fill="#44705a"/><path d="M80.3 -0.3H99.3" transform="rotate(60 89.8 -0.3)" stroke="#8fb09c" stroke-width="0.8" opacity="0.5"/><ellipse cx="74.5" cy="21.7" rx="9.9" ry="6.0" transform="rotate(86 74.5 21.7)" fill="#4a735c"/><path d="M66.6 21.7H82.4" transform="rotate(86 74.5 21.7)" stroke="#8fb09c" stroke-width="0.8" opacity="0.5"/><ellipse cx="13.8" cy="57.8" rx="9.2" ry="5.5" transform="rotate(140 13.8 57.8)" fill="#4a735c"/><path d="M6.5 57.8H21.1" transform="rotate(140 13.8 57.8)" stroke="#8fb09c" stroke-width="0.8" opacity="0.5"/><ellipse cx="166.5" cy="14.6" rx="8.3" ry="5.0" transform="rotate(13 166.5 14.6)" fill="#2e4c3d"/><path d="M159.8 14.6H173.1" transform="rotate(13 166.5 14.6)" stroke="#8fb09c" stroke-width="0.8" opacity="0.5"/><ellipse cx="167.8" cy="62.0" rx="11.7" ry="7.0" transform="rotate(84 167.8 62.0)" fill="#62896f"/><path d="M158.4 62.0H177.2" transform="rotate(84 167.8 62.0)" stroke="#8fb09c" stroke-width="0.8" opacity="0.5"/><ellipse cx="-2.3" cy="40.6" rx="11.1" ry="6.6" transform="rotate(173 -2.3 40.6)" fill="#62896f"/><path d="M-11.1 40.6H6.6" transform="rotate(173 -2.3 40.6)" stroke="#8fb09c" stroke-width="0.8" opacity="0.5"/><ellipse cx="136.6" cy="5.4" rx="9.3" ry="5.6" transform="rotate(153 136.6 5.4)" fill="#62896f"/><path d="M129.2 5.4H144.0" transform="rotate(153 136.6 5.4)" stroke="#8fb09c" stroke-width="0.8" opacity="0.5"/><ellipse cx="149.8" cy="110.0" rx="11.4" ry="6.8" transform="rotate(24 149.8 110.0)" fill="#3d6450"/><path d="M140.7 110.0H159.0" transform="rotate(24 149.8 110.0)" stroke="#8fb09c" stroke-width="0.8" opacity="0.5"/><ellipse cx="136.6" cy="170.6" rx="11.9" ry="7.2" transform="rotate(162 136.6 170.6)" fill="#3d6450"/><path d="M127.1 170.6H146.2" transform="rotate(162 136.6 170.6)" stroke="#8fb09c" stroke-width="0.8" opacity="0.5"/><ellipse cx="150.2" cy="160.6" rx="12.8" ry="7.7" transform="rotate(17 150.2 160.6)" fill="#557d66"/><path d="M139.9 160.6H160.4" transform="rotate(17 150.2 160.6)" stroke="#8fb09c" stroke-width="0.8" opacity="0.5"/><ellipse cx="150.9" cy="155.6" rx="10.2" ry="6.1" transform="rotate(14 150.9 155.6)" fill="#557d66"/><path d="M142.8 155.6H159.0" transform="rotate(14 150.9 155.6)" stroke="#8fb09c" stroke-width="0.8" opacity="0.5"/><ellipse cx="28.0" cy="67.4" rx="9.6" ry="5.8" transform="rotate(31 28.0 67.4)" fill="#62896f"/><path d="M20.3 67.4H35.7" transform="rotate(31 28.0 67.4)" stroke="#8fb09c" stroke-width="0.8" opacity="0.5"/><ellipse cx="-0.2" cy="33.0" rx="9.8" ry="5.9" transform="rotate(161 -0.2 33.0)" fill="#2e4c3d"/><path d="M-8.1 33.0H7.6" transform="rotate(161 -0.2 33.0)" stroke="#8fb09c" stroke-width="0.8" opacity="0.5"/><ellipse cx="10.2" cy="170.5" rx="11.0" ry="6.6" transform="rotate(169 10.2 170.5)" fill="#2e4c3d"/><path d="M1.4 170.5H19.0" transform="rotate(169 10.2 170.5)" stroke="#8fb09c" stroke-width="0.8" opacity="0.5"/><ellipse cx="124.8" cy="33.0" rx="10.7" ry="6.4" transform="rotate(60 124.8 33.0)" fill="#3d6450"/><path d="M116.3 33.0H133.4" transform="rotate(60 124.8 33.0)" stroke="#8fb09c" stroke-width="0.8" opacity="0.5"/><ellipse cx="113.5" cy="70.9" rx="9.1" ry="5.5" transform="rotate(131 113.5 70.9)" fill="#44705a"/><path d="M106.2 70.9H120.9" transform="rotate(131 113.5 70.9)" stroke="#8fb09c" stroke-width="0.8" opacity="0.5"/><ellipse cx="142.5" cy="87.5" rx="8.5" ry="5.1" transform="rotate(129 142.5 87.5)" fill="#557d66"/><path d="M135.7 87.5H149.3" transform="rotate(129 142.5 87.5)" stroke="#8fb09c" stroke-width="0.8" opacity="0.5"/><ellipse cx="157.4" cy="31.9" rx="9.1" ry="5.5" transform="rotate(177 157.4 31.9)" fill="#557d66"/><path d="M150.1 31.9H164.7" transform="rotate(177 157.4 31.9)" stroke="#8fb09c" stroke-width="0.8" opacity="0.5"/><ellipse cx="2.4" cy="21.8" rx="8.8" ry="5.3" transform="rotate(17 2.4 21.8)" fill="#44705a"/><path d="M-4.6 21.8H9.5" transform="rotate(17 2.4 21.8)" stroke="#8fb09c" stroke-width="0.8" opacity="0.5"/><ellipse cx="134.8" cy="67.7" rx="12.2" ry="7.3" transform="rotate(70 134.8 67.7)" fill="#62896f"/><path d="M125.0 67.7H144.6" transform="rotate(70 134.8 67.7)" stroke="#8fb09c" stroke-width="0.8" opacity="0.5"/><ellipse cx="84.6" cy="19.3" rx="11.5" ry="6.9" transform="rotate(65 84.6 19.3)" fill="#557d66"/><path d="M75.4 19.3H93.8" transform="rotate(65 84.6 19.3)" stroke="#8fb09c" stroke-width="0.8" opacity="0.5"/><ellipse cx="136.5" cy="134.9" rx="8.9" ry="5.3" transform="rotate(31 136.5 134.9)" fill="#557d66"/><path d="M129.4 134.9H143.6" transform="rotate(31 136.5 134.9)" stroke="#8fb09c" stroke-width="0.8" opacity="0.5"/><ellipse cx="116.1" cy="-1.4" rx="10.4" ry="6.2" transform="rotate(156 116.1 -1.4)" fill="#2e4c3d"/><path d="M107.8 -1.4H124.4" transform="rotate(156 116.1 -1.4)" stroke="#8fb09c" stroke-width="0.8" opacity="0.5"/><ellipse cx="70.6" cy="171.1" rx="8.5" ry="5.1" transform="rotate(51 70.6 171.1)" fill="#62896f"/><path d="M63.8 171.1H77.4" transform="rotate(51 70.6 171.1)" stroke="#8fb09c" stroke-width="0.8" opacity="0.5"/><ellipse cx="36.1" cy="54.6" rx="11.7" ry="7.0" transform="rotate(63 36.1 54.6)" fill="#62896f"/><path d="M26.7 54.6H45.5" transform="rotate(63 36.1 54.6)" stroke="#8fb09c" stroke-width="0.8" opacity="0.5"/><ellipse cx="4.0" cy="45.1" rx="9.7" ry="5.8" transform="rotate(104 4.0 45.1)" fill="#62896f"/><path d="M-3.8 45.1H11.8" transform="rotate(104 4.0 45.1)" stroke="#8fb09c" stroke-width="0.8" opacity="0.5"/><ellipse cx="132.8" cy="115.4" rx="8.5" ry="5.1" transform="rotate(24 132.8 115.4)" fill="#4a735c"/><path d="M126.0 115.4H139.6" transform="rotate(24 132.8 115.4)" stroke="#8fb09c" stroke-width="0.8" opacity="0.5"/><ellipse cx="127.4" cy="19.2" rx="10.1" ry="6.1" transform="rotate(93 127.4 19.2)" fill="#44705a"/><path d="M119.3 19.2H135.5" transform="rotate(93 127.4 19.2)" stroke="#8fb09c" stroke-width="0.8" opacity="0.5"/><ellipse cx="116.4" cy="71.2" rx="12.2" ry="7.3" transform="rotate(180 116.4 71.2)" fill="#44705a"/><path d="M106.6 71.2H126.2" transform="rotate(180 116.4 71.2)" stroke="#8fb09c" stroke-width="0.8" opacity="0.5"/><ellipse cx="121.7" cy="84.3" rx="8.3" ry="5.0" transform="rotate(145 121.7 84.3)" fill="#35594a"/><path d="M115.0 84.3H128.3" transform="rotate(145 121.7 84.3)" stroke="#8fb09c" stroke-width="0.8" opacity="0.5"/><ellipse cx="150.0" cy="112.0" rx="9.0" ry="5.4" transform="rotate(60 150.0 112.0)" fill="#6f9f6c"/><path d="M142.8 112.0H157.2" transform="rotate(60 150.0 112.0)" stroke="#a8cfa0" stroke-width="0.8" opacity="0.5"/><ellipse cx="146.0" cy="134.0" rx="9.0" ry="5.4" transform="rotate(100 146.0 134.0)" fill="#6f9f6c"/><path d="M138.8 134.0H153.2" transform="rotate(100 146.0 134.0)" stroke="#a8cfa0" stroke-width="0.8" opacity="0.5"/><ellipse cx="140.0" cy="95.0" rx="9.0" ry="5.4" transform="rotate(30 140.0 95.0)" fill="#6f9f6c"/><path d="M132.8 95.0H147.2" transform="rotate(30 140.0 95.0)" stroke="#a8cfa0" stroke-width="0.8" opacity="0.5"/><ellipse cx="158.0" cy="82.0" rx="9.0" ry="5.4" transform="rotate(70 158.0 82.0)" fill="#6f9f6c"/><path d="M150.8 82.0H165.2" transform="rotate(70 158.0 82.0)" stroke="#a8cfa0" stroke-width="0.8" opacity="0.5"/></g><radialGradient id="dk" cx="0.5" cy="0.5" r="0.5"><stop offset="0" stop-color="#111512" stop-opacity="1"/><stop offset="0.6" stop-color="#131814" stop-opacity="0.8"/><stop offset="1" stop-color="#131814" stop-opacity="0"/></radialGradient><ellipse cx="85" cy="262" rx="50" ry="48" fill="url(#dk)"/><g filter="url(#bl2)"><ellipse cx="95.8" cy="222.5" rx="8.5" ry="5.1" transform="rotate(109 95.8 222.5)" fill="#3f7a4e"/><ellipse cx="109.4" cy="235.2" rx="8.9" ry="5.3" transform="rotate(99 109.4 235.2)" fill="#4b8a58"/><ellipse cx="123.4" cy="238.1" rx="10.3" ry="6.2" transform="rotate(86 123.4 238.1)" fill="#4b8a58"/><ellipse cx="119.0" cy="242.6" rx="10.7" ry="6.4" transform="rotate(70 119.0 242.6)" fill="#3f7a4e"/><ellipse cx="133.7" cy="249.8" rx="10.0" ry="6.0" transform="rotate(106 133.7 249.8)" fill="#5a9a63"/><ellipse cx="143.2" cy="267.1" rx="8.1" ry="4.8" transform="rotate(107 143.2 267.1)" fill="#356a45"/><ellipse cx="149.9" cy="276.6" rx="8.6" ry="5.1" transform="rotate(144 149.9 276.6)" fill="#356a45"/><ellipse cx="161.7" cy="275.4" rx="8.5" ry="5.1" transform="rotate(6 161.7 275.4)" fill="#356a45"/><ellipse cx="157.5" cy="293.6" rx="8.7" ry="5.2" transform="rotate(113 157.5 293.6)" fill="#5a9a63"/><ellipse cx="16.8" cy="290.0" rx="9.3" ry="5.6" transform="rotate(96 16.8 290.0)" fill="#4b8a58"/><ellipse cx="23.4" cy="294.3" rx="9.7" ry="5.8" transform="rotate(167 23.4 294.3)" fill="#4b8a58"/><ellipse cx="39.6" cy="280.3" rx="7.7" ry="4.6" transform="rotate(155 39.6 280.3)" fill="#356a45"/><ellipse cx="36.2" cy="274.1" rx="9.9" ry="5.9" transform="rotate(38 36.2 274.1)" fill="#356a45"/><ellipse cx="10.7" cy="247.5" rx="8.9" ry="5.4" transform="rotate(115 10.7 247.5)" fill="#4b8a58"/><ellipse cx="3.5" cy="288.0" rx="8.6" ry="5.2" transform="rotate(27 3.5 288.0)" fill="#4b8a58"/><ellipse cx="17.1" cy="264.9" rx="7.5" ry="4.5" transform="rotate(109 17.1 264.9)" fill="#3f7a4e"/><ellipse cx="17.0" cy="199.8" rx="9.2" ry="5.5" transform="rotate(166 17.0 199.8)" fill="#3a6a4a"/><ellipse cx="22.7" cy="234.9" rx="8.2" ry="4.9" transform="rotate(14 22.7 234.9)" fill="#2f5a40"/><ellipse cx="42.7" cy="232.6" rx="8.2" ry="4.9" transform="rotate(47 42.7 232.6)" fill="#2f5a40"/><ellipse cx="44.1" cy="178.9" rx="8.4" ry="5.1" transform="rotate(25 44.1 178.9)" fill="#3a6a4a"/><ellipse cx="17.0" cy="223.9" rx="8.5" ry="5.1" transform="rotate(156 17.0 223.9)" fill="#2f5a40"/><ellipse cx="27.9" cy="230.0" rx="9.0" ry="5.4" transform="rotate(78 27.9 230.0)" fill="#2f5a40"/></g><g filter="url(#bl1)"><path d="M50 88 Q52 72 70 71 Q88 68 97 80 Q104 92 100 108 Q95 122 80 124 Q62 125 55 112 Q47 100 50 88Z" fill="#e2e6dc"/><path d="M50 85 Q58 70 78 73 Q70 78 62 82 Q55 90 50 85Z" fill="#fafbf7"/><path d="M62 95 Q70 84 86 88 Q96 96 90 110 Q80 118 68 112 Q60 104 62 95Z" fill="#f4f5f0"/><ellipse cx="72" cy="94" rx="5" ry="4" fill="#b9c08e"/><path d="M88 76 Q98 82 99 96" stroke="#c5cabb" stroke-width="1.2" fill="none"/></g><g filter="url(#bl1)"><ellipse cx="58" cy="131" rx="6" ry="5" fill="#dfe3c6"/><ellipse cx="56" cy="133" rx="4.5" ry="3.5" fill="#7f9a62" opacity="0.75"/></g><g filter="url(#bl1)"><ellipse cx="101" cy="222" rx="6" ry="5" fill="#dfe3c6"/><ellipse cx="99" cy="224" rx="4.5" ry="3.5" fill="#7f9a62" opacity="0.75"/></g><g filter="url(#bl1)"><ellipse cx="33" cy="284" rx="6" ry="5" fill="#dfe3c6"/><ellipse cx="31" cy="286" rx="4.5" ry="3.5" fill="#7f9a62" opacity="0.75"/></g></svg></div>
  <!-- img 3 sky -->
  <div class="a" id="im3" style="left:15px;top:428px;width:168px;height:260px;border-radius:4px;background:#2a78de;overflow:hidden"><svg width="168" height="260" viewBox="0 0 168 260" style="position:absolute;left:0;top:0"><defs><filter id="sb3" x="-30%" y="-30%" width="160%" height="160%"><feGaussianBlur stdDeviation="4"/></filter><filter id="sb1" x="-10%" y="-10%" width="120%" height="120%"><feGaussianBlur stdDeviation="0.8"/></filter><linearGradient id="sky" x1="0" y1="0" x2="0" y2="1"><stop offset="0" stop-color="#2a78de"/><stop offset="0.3" stop-color="#2f88e4"/><stop offset="0.6" stop-color="#4aa8ec"/><stop offset="0.69" stop-color="#6ab9ee"/><stop offset="0.83" stop-color="#a8d5f2"/><stop offset="0.92" stop-color="#cfe8f6"/><stop offset="1" stop-color="#dcf0f8"/></linearGradient><linearGradient id="gr" x1="0" y1="0" x2="0" y2="1"><stop offset="0" stop-color="#8cc454"/><stop offset="1" stop-color="#98b85a"/></linearGradient></defs><rect width="168" height="185" fill="url(#sky)"/><g filter="url(#sb3)" opacity="0.25"><ellipse cx="50" cy="125" rx="70" ry="6" fill="#cfe6f6" transform="rotate(-12 50 125)"/><ellipse cx="120" cy="150" rx="60" ry="5" fill="#e0f0f8" transform="rotate(-8 120 150)"/></g><rect y="184" width="168" height="76" fill="url(#gr)"/><g filter="url(#sb1)"><ellipse cx="34" cy="218" rx="21" ry="26" fill="#3a8238"/><circle cx="24.2" cy="237.2" r="2.1" fill="#55a04a"/><circle cx="19.2" cy="206.5" r="4.0" fill="#62ab55"/><circle cx="30.5" cy="197.2" r="2.9" fill="#5aa64c"/><circle cx="33.8" cy="204.1" r="3.6" fill="#55a04a"/><circle cx="33.5" cy="228.5" r="3.3" fill="#47923f"/><circle cx="30.7" cy="234.6" r="2.6" fill="#55a04a"/><circle cx="39.8" cy="200.1" r="3.6" fill="#5aa64c"/><circle cx="38.3" cy="212.1" r="3.3" fill="#2d6e2e"/><circle cx="24.5" cy="199.6" r="3.8" fill="#47923f"/><circle cx="48.3" cy="220.8" r="2.1" fill="#55a04a"/><circle cx="35.4" cy="197.5" r="3.3" fill="#62ab55"/><circle cx="49.9" cy="220.7" r="3.4" fill="#5aa64c"/><circle cx="26.3" cy="211.2" r="3.7" fill="#62ab55"/><circle cx="21.8" cy="221.7" r="3.0" fill="#2d6e2e"/><circle cx="41.2" cy="236.7" r="3.7" fill="#47923f"/><circle cx="38.4" cy="209.1" r="2.6" fill="#2d6e2e"/><circle cx="34.3" cy="199.0" r="3.8" fill="#47923f"/><circle cx="48.7" cy="219.3" r="2.6" fill="#55a04a"/><circle cx="26.7" cy="205.3" r="1.9" fill="#2d6e2e"/><circle cx="29.6" cy="231.7" r="3.8" fill="#62ab55"/><circle cx="39.6" cy="200.9" r="3.9" fill="#55a04a"/><circle cx="23.4" cy="228.8" r="2.5" fill="#55a04a"/><circle cx="44.6" cy="212.2" r="3.6" fill="#47923f"/><circle cx="31.7" cy="205.8" r="2.7" fill="#5aa64c"/><circle cx="30.7" cy="199.3" r="2.0" fill="#55a04a"/><circle cx="17.4" cy="224.4" r="3.5" fill="#47923f"/><circle cx="29.0" cy="230.6" r="2.9" fill="#62ab55"/><circle cx="51.1" cy="198.6" r="1.8" fill="#62ab55"/><circle cx="28.3" cy="224.1" r="2.1" fill="#2d6e2e"/><circle cx="28.7" cy="237.3" r="1.8" fill="#5aa64c"/><circle cx="23.6" cy="233.4" r="1.9" fill="#47923f"/><circle cx="22.3" cy="210.4" r="2.7" fill="#55a04a"/><circle cx="19.1" cy="221.9" r="2.9" fill="#5aa64c"/><circle cx="44.4" cy="212.2" r="2.0" fill="#5aa64c"/><circle cx="39.3" cy="226.8" r="2.9" fill="#55a04a"/><circle cx="41.7" cy="216.1" r="2.7" fill="#2d6e2e"/><circle cx="32.4" cy="198.1" r="1.9" fill="#55a04a"/><circle cx="20.0" cy="227.0" r="3.4" fill="#47923f"/><circle cx="48.5" cy="224.0" r="3.6" fill="#47923f"/><circle cx="19.5" cy="237.4" r="3.5" fill="#47923f"/><circle cx="45.4" cy="220.3" r="2.9" fill="#2d6e2e"/><circle cx="34.9" cy="227.8" r="3.2" fill="#55a04a"/><ellipse cx="88" cy="224" rx="34" ry="32" fill="#3a8238"/><circle cx="75.8" cy="212.5" r="2.0" fill="#2d6e2e"/><circle cx="112.7" cy="248.6" r="2.3" fill="#2d6e2e"/><circle cx="63.7" cy="218.9" r="3.4" fill="#2d6e2e"/><circle cx="88.9" cy="229.8" r="3.9" fill="#2d6e2e"/><circle cx="96.7" cy="202.6" r="2.9" fill="#5aa64c"/><circle cx="114.5" cy="241.5" r="2.5" fill="#2d6e2e"/><circle cx="82.0" cy="217.0" r="3.8" fill="#47923f"/><circle cx="113.2" cy="235.2" r="3.6" fill="#47923f"/><circle cx="92.9" cy="232.3" r="2.2" fill="#47923f"/><circle cx="88.4" cy="201.1" r="2.2" fill="#5aa64c"/><circle cx="101.5" cy="211.1" r="2.7" fill="#55a04a"/><circle cx="95.2" cy="240.4" r="4.0" fill="#2d6e2e"/><circle cx="105.6" cy="223.4" r="2.4" fill="#5aa64c"/><circle cx="73.2" cy="209.8" r="2.3" fill="#47923f"/><circle cx="102.3" cy="210.0" r="3.6" fill="#47923f"/><circle cx="89.5" cy="207.1" r="2.9" fill="#55a04a"/><circle cx="105.0" cy="217.3" r="3.2" fill="#47923f"/><circle cx="116.5" cy="245.4" r="3.5" fill="#62ab55"/><circle cx="60.4" cy="206.9" r="2.4" fill="#55a04a"/><circle cx="85.8" cy="242.7" r="3.8" fill="#47923f"/><circle cx="64.5" cy="228.9" r="3.7" fill="#55a04a"/><circle cx="77.6" cy="198.8" r="3.8" fill="#62ab55"/><circle cx="96.9" cy="216.1" r="3.6" fill="#62ab55"/><circle cx="101.0" cy="228.5" r="2.5" fill="#2d6e2e"/><circle cx="102.1" cy="247.9" r="1.9" fill="#55a04a"/><circle cx="112.1" cy="229.0" r="2.8" fill="#62ab55"/><circle cx="73.8" cy="217.4" r="2.7" fill="#55a04a"/><circle cx="64.9" cy="208.6" r="2.4" fill="#62ab55"/><circle cx="78.6" cy="207.3" r="3.9" fill="#55a04a"/><circle cx="91.2" cy="235.7" r="3.6" fill="#47923f"/><circle cx="96.1" cy="212.4" r="2.3" fill="#47923f"/><circle cx="86.8" cy="226.5" r="3.9" fill="#62ab55"/><circle cx="112.9" cy="203.8" r="2.5" fill="#5aa64c"/><circle cx="69.2" cy="203.9" r="2.8" fill="#5aa64c"/><circle cx="92.9" cy="229.2" r="2.7" fill="#5aa64c"/><circle cx="92.5" cy="244.1" r="3.8" fill="#47923f"/><circle cx="115.9" cy="222.7" r="2.6" fill="#47923f"/><circle cx="69.9" cy="210.9" r="3.9" fill="#62ab55"/><circle cx="107.6" cy="211.4" r="3.2" fill="#47923f"/><circle cx="89.9" cy="246.3" r="2.4" fill="#62ab55"/><circle cx="92.0" cy="217.4" r="2.1" fill="#5aa64c"/><circle cx="96.5" cy="203.4" r="2.7" fill="#55a04a"/><circle cx="109.3" cy="223.5" r="2.5" fill="#5aa64c"/><circle cx="99.5" cy="229.6" r="2.1" fill="#55a04a"/><circle cx="63.7" cy="206.5" r="3.1" fill="#62ab55"/><circle cx="103.5" cy="241.2" r="3.0" fill="#47923f"/><circle cx="114.9" cy="202.5" r="4.0" fill="#55a04a"/><circle cx="116.2" cy="234.6" r="2.6" fill="#2d6e2e"/><circle cx="65.2" cy="213.7" r="2.0" fill="#62ab55"/><circle cx="96.4" cy="222.0" r="3.1" fill="#2d6e2e"/><circle cx="102.6" cy="219.5" r="3.4" fill="#55a04a"/><circle cx="101.6" cy="245.8" r="3.3" fill="#2d6e2e"/><circle cx="62.6" cy="247.5" r="2.9" fill="#5aa64c"/><circle cx="80.3" cy="226.4" r="2.5" fill="#2d6e2e"/><circle cx="104.5" cy="238.2" r="3.4" fill="#47923f"/><circle cx="98.7" cy="220.8" r="2.5" fill="#5aa64c"/><circle cx="108.8" cy="220.4" r="3.2" fill="#5aa64c"/><circle cx="111.0" cy="220.0" r="2.1" fill="#55a04a"/><circle cx="80.0" cy="228.5" r="2.8" fill="#5aa64c"/><circle cx="92.2" cy="207.5" r="3.0" fill="#47923f"/><circle cx="69.1" cy="204.5" r="3.6" fill="#55a04a"/><circle cx="90.8" cy="231.9" r="2.5" fill="#62ab55"/><circle cx="95.9" cy="210.2" r="3.7" fill="#62ab55"/><circle cx="114.4" cy="197.5" r="2.8" fill="#62ab55"/><circle cx="77.4" cy="198.3" r="1.8" fill="#55a04a"/><circle cx="101.7" cy="227.2" r="3.2" fill="#55a04a"/><circle cx="61.7" cy="208.1" r="2.5" fill="#55a04a"/><circle cx="83.1" cy="244.9" r="1.8" fill="#55a04a"/><ellipse cx="146" cy="242" rx="14" ry="18" fill="#3a8238"/><circle cx="146.4" cy="232.7" r="3.8" fill="#5aa64c"/><circle cx="155.7" cy="239.3" r="2.1" fill="#62ab55"/><circle cx="149.8" cy="249.8" r="3.5" fill="#2d6e2e"/><circle cx="156.4" cy="239.7" r="1.9" fill="#5aa64c"/><circle cx="150.6" cy="232.6" r="1.9" fill="#55a04a"/><circle cx="152.4" cy="236.1" r="2.2" fill="#55a04a"/><circle cx="143.5" cy="247.3" r="2.4" fill="#47923f"/><circle cx="140.7" cy="227.3" r="3.5" fill="#62ab55"/><circle cx="138.6" cy="250.7" r="3.2" fill="#5aa64c"/><circle cx="137.8" cy="251.2" r="2.3" fill="#55a04a"/><circle cx="144.5" cy="253.2" r="3.6" fill="#47923f"/><circle cx="150.4" cy="253.7" r="3.7" fill="#2d6e2e"/><circle cx="148.8" cy="245.0" r="2.8" fill="#62ab55"/><circle cx="146.4" cy="236.7" r="3.9" fill="#47923f"/><circle cx="139.8" cy="233.3" r="3.4" fill="#47923f"/><circle cx="156.0" cy="236.7" r="2.1" fill="#2d6e2e"/><circle cx="135.8" cy="236.3" r="3.1" fill="#62ab55"/><circle cx="151.2" cy="238.5" r="1.8" fill="#2d6e2e"/><circle cx="143.6" cy="249.5" r="2.1" fill="#5aa64c"/><circle cx="150.2" cy="254.2" r="3.7" fill="#5aa64c"/><circle cx="148.3" cy="241.2" r="3.0" fill="#62ab55"/><circle cx="134.5" cy="227.2" r="3.3" fill="#47923f"/><circle cx="141.7" cy="247.6" r="3.7" fill="#55a04a"/><circle cx="148.7" cy="230.1" r="4.0" fill="#2d6e2e"/><circle cx="136.0" cy="227.5" r="2.3" fill="#55a04a"/><circle cx="135.5" cy="236.9" r="3.4" fill="#5aa64c"/><circle cx="148.5" cy="255.3" r="3.4" fill="#2d6e2e"/><circle cx="149.1" cy="255.5" r="3.9" fill="#5aa64c"/></g></svg></div>
  <!-- img 4 teal -->
  <div class="a" id="im4" style="left:193px;top:428px;width:167px;height:260px;border-radius:4px;background:#3e6878"></div>
</div>

<!-- explorer -->
<div class="a" id="exp"></div>
<div class="a" style="left:508px;top:94px;width:196px;height:19px;background:#323232"></div>
<!-- explorer icon row -->
<svg class="a" style="left:516px;top:95px" width="16" height="18"><path d="M4.5 4.5V1.5h6l3.5 3.5v9h-3" stroke="#eee" stroke-width="1.3" fill="none"/><path d="M1.5 4.5h7l2.5 2.5v9.5h-9.5z" stroke="#eee" stroke-width="1.3" fill="none"/></svg>
<svg class="a" style="left:549px;top:96px" width="17" height="17"><circle cx="10" cy="7" r="5" stroke="#999" stroke-width="1.2" fill="none"/><path d="M6.5 10.5L1.5 15.5" stroke="#999" stroke-width="1.3"/></svg>
<svg class="a" style="left:581px;top:95px" width="14" height="18"><circle cx="3.5" cy="3" r="2" stroke="#999" stroke-width="1.1" fill="none"/><circle cx="3.5" cy="15" r="2" stroke="#999" stroke-width="1.1" fill="none"/><circle cx="11" cy="6" r="2" stroke="#999" stroke-width="1.1" fill="none"/><path d="M3.5 5v8M10 8L4.5 12.5" stroke="#999" stroke-width="1.1" fill="none"/></svg>
<svg class="a" style="left:612px;top:95px" width="18" height="18"><rect x="1.5" y="6.5" width="6" height="5" stroke="#999" stroke-width="1.1" fill="none"/><rect x="1.5" y="11.5" width="6" height="5" stroke="#999" stroke-width="1.1" fill="none"/><rect x="7.5" y="11.5" width="6" height="5" stroke="#999" stroke-width="1.1" fill="none"/><rect x="10.5" y="1.5" width="6" height="6" stroke="#999" stroke-width="1.1" fill="none"/></svg>
<svg class="a" style="left:647px;top:96px" width="15" height="16"><rect x="1.5" y="1.5" width="12" height="13" stroke="#999" stroke-width="1.1" fill="none"/><path d="M4 5h7M4 8h4M4 11h7" stroke="#999" stroke-width="1.1"/></svg>
<svg class="a" style="left:675px;top:97px" width="20" height="14"><path d="M1 7h17q-1 6-8 6T1 7z" fill="#888"/><rect x="5" y="3" width="3" height="3" fill="#888"/><rect x="9" y="3" width="3" height="3" fill="#888"/><rect x="9" y="0" width="3" height="2.5" fill="#888"/></svg>

<div class="t" style="left:529px;top:130px;font-size:12px;color:#ddd"><i class="c">资</i><i class="c">源</i><i class="c">管</i><i class="c">理</i><i class="c">器</i></div>
<svg class="a" style="left:674px;top:133px" width="16" height="6"><circle cx="3" cy="3" r="1.4" fill="#ccc"/><circle cx="8" cy="3" r="1.4" fill="#ccc"/><circle cx="13" cy="3" r="1.4" fill="#ccc"/></svg>
<div class="a" style="left:511px;top:154px;width:194px;height:43px;background:#313131;border:1px solid #3a3a3a"></div>
<svg class="a" style="left:515px;top:160px" width="8" height="8"><path d="M2 1L6 4L2 7Z" fill="#aaa"/></svg>
<div class="t" style="left:529px;top:159px;font-size:12px;color:#ddd"><i class="c">打</i><i class="c">开</i><i class="c">的</i><i class="c">编</i><i class="c">辑</i><i class="c">器</i></div>
<svg class="a" style="left:514px;top:182px" width="8" height="8"><path d="M1 2L7 2L4 6Z" fill="#aaa"/></svg>
<div class="t" style="left:529px;top:181px;font-size:12px;color:#ddd"><i class="c">壁</i><i class="c">纸</i><i class="c">小</i><i class="c">程</i><i class="c">序</i></div>
<div class="a" style="left:511px;top:352px;width:194px;height:20px;background:#3d3d3d;border-bottom:1px solid #474747"></div>
<svg class="a" style="left:529px;top:205px" width="8" height="8"><path d="M2 1L6 4L2 7Z" fill="#bbb"/></svg>
<svg class="a" style="left:529px;top:227px" width="8" height="8"><path d="M2 1L6 4L2 7Z" fill="#bbb"/></svg>
<svg class="a" style="left:529px;top:249px" width="8" height="8"><path d="M2 1L6 4L2 7Z" fill="#bbb"/></svg>
<svg class="a" style="left:543px;top:202px" width="16" height="14"><path d="M1 2h5l2 2h7v9H1z" fill="#9aa5ad"/></svg>
<svg class="a" style="left:543px;top:224px" width="16" height="14"><path d="M1 2h5l2 2h7v9H1z" fill="#e8734f"/><rect x="8" y="7" width="6" height="5" fill="#f3b3a0"/></svg>
<svg class="a" style="left:543px;top:246px" width="16" height="14"><path d="M1 2h5l2 2h7v9H1z" fill="#7cb342"/><circle cx="11" cy="9" r="2.5" fill="#cfe8b0"/></svg>
<svg class="a" style="left:544px;top:267px" width="14" height="16"><path d="M1 1h8l4 4v10H1z" fill="#4a90e2"/><path d="M3 8h7M3 11h7" stroke="#fff" stroke-width="1.2"/></svg>
<svg class="a" style="left:543px;top:290px" width="16" height="14"><path d="M6 4H4a3 3 0 0 0 0 6h2M10 4h2a3 3 0 0 1 0 6h-2M5 7h6" stroke="#6a9fd8" stroke-width="1.5" fill="none"/></svg>
<svg class="a" style="left:544px;top:311px" width="14" height="16"><path d="M1 1h12l-1.2 12L7 15 2.2 13z" fill="#e44d26"/><path d="M4 4h6l-.4 3H5l.2 2h4.2l-.3 2.3L7 12l-2-.7" stroke="#fff" stroke-width="1" fill="none"/></svg>
<svg class="a" style="left:544px;top:334px" width="14" height="14"><rect x="0" y="0" width="14" height="14" fill="#e6c04a"/><text x="6" y="12" font-size="6" font-family="Liberation Sans" font-weight="bold" fill="#333">JS</text></svg>
<div class="t" style="left:542px;top:356px;font-size:12px;color:#e6c04a;font-family:'Liberation Mono',monospace;letter-spacing:-1px">{.}</div>
<svg class="a" style="left:544px;top:378px" width="14" height="14"><path d="M2 1h11l-1.5 11L7 14l-4.5-2z" fill="#3c8de0"/><path d="M4 4h6M4.5 7h5M5 10l2 1 2-1" stroke="#fff" stroke-width="1.1" fill="none"/></svg>
<div class="t" style="left:542px;top:400px;font-size:12px;color:#e6c04a;font-family:'Liberation Mono',monospace;letter-spacing:-1px">{.}</div>
<div class="t" style="left:542px;top:422px;font-size:12px;color:#e6c04a;font-family:'Liberation Mono',monospace;letter-spacing:-1px">{.}</div>
<svg class="a" style="left:544px;top:444px" width="14" height="14"><circle cx="7" cy="7" r="6.5" fill="#4a90e2"/><path d="M7 6v5M7 3.5v1" stroke="#fff" stroke-width="1.6"/></svg>
<div class="t" style="left:542px;top:466px;font-size:12px;color:#e6c04a;font-family:'Liberation Mono',monospace;letter-spacing:-1px">{.}</div>
<div class="t tree" style="left:565px;top:202px">component</div>
<div class="t tree" style="left:565px;top:224px">pages</div>
<div class="t tree" style="left:565px;top:246px">utils</div>
<div class="t tree" style="left:565px;top:268px"><i class="c">不</i><i class="c">会</i><i class="c">搭</i><i class="c">建</i><i class="c p">？</i>.txt</div>
<div class="t tree" style="left:565px;top:290px"><i class="c">酷</i><i class="c">库</i><i class="c">博</i><i class="c">客</i>.url</div>
<div class="t tree" style="left:565px;top:312px"><i class="c">使</i><i class="c">用</i><i class="c">说</i><i class="c">明</i>.html</div>
<div class="t tree" style="left:565px;top:334px">app.js</div>
<div class="t tree" style="left:565px;top:356px">app.json</div>
<div class="t tree" style="left:565px;top:378px">app.wxss</div>
<div class="t tree" style="left:565px;top:400px">project.config.json</div>
<div class="t tree" style="left:565px;top:422px">project.private.config.js...</div>
<div class="t tree" style="left:565px;top:444px">README.txt</div>
<div class="t tree" style="left:565px;top:466px">sitemap.json</div>
<div class="a" style="left:510px;top:866px;width:194px;height:14px;background:#373737;border-top:1px solid #2c2c2c"></div><svg class="a" style="left:515px;top:872px" width="8" height="8"><path d="M2 1L6 4L2 7Z" fill="#aaa"/></svg>
<div class="t" style="left:529px;top:871px;font-size:12px;color:#ccc"><i class="c">大</i><i class="c">纲</i></div>
<div class="a" style="left:704px;top:94px;width:7px;height:786px;background:#2e2e2e"></div><div class="a" style="left:707px;top:94px;width:1px;height:786px;background:#242424"></div>

<!-- editor -->
<div class="a" id="ed"></div>
<div class="a" style="left:711px;top:94px;width:491px;height:20px;background:#333"></div><div class="a" style="left:711px;top:114px;width:491px;height:1px;background:#2c2c2c"></div>
<div class="a" style="left:711px;top:94px;width:117px;height:21px;background:#2a2a2a"></div><div class="a" style="left:828px;top:94px;width:1px;height:21px;background:#262626"></div>
<div class="t" style="left:717px;top:97px;font-size:13px;color:#e6c04a;font-family:'Liberation Mono',monospace;letter-spacing:-1.5px">{.}</div>
<div class="t" style="left:740px;top:97px;font-size:13px;color:#e8e8e8;font-style:italic">app.json</div>
<svg class="a" style="left:806px;top:98px" width="12" height="12"><path d="M1.5 1.5L10.5 10.5M10.5 1.5L1.5 10.5" stroke="#eee" stroke-width="1.6"/></svg>
<svg class="a" style="left:1143px;top:97px" width="14" height="14"><rect x="1" y="1" width="12" height="12" stroke="#ccc" stroke-width="1.3" fill="none"/><path d="M7 1v12" stroke="#ccc" stroke-width="1.3"/></svg>
<svg class="a" style="left:1174px;top:101px" width="16" height="6"><circle cx="3" cy="3" r="1.5" fill="#ccc"/><circle cx="8" cy="3" r="1.5" fill="#ccc"/><circle cx="13" cy="3" r="1.5" fill="#ccc"/></svg><div class="a" style="left:829px;top:114px;width:373px;height:4px;background:#313131"></div>
<!-- breadcrumb -->
<svg class="a" style="left:716px;top:123px" width="16" height="14"><path d="M1 2h14M1 5h14M1 8h14M1 11h14" stroke="#aaa" stroke-width="1.2"/></svg>
<svg class="a" style="left:747px;top:122px" width="13" height="16"><path d="M1.5 1.5h10v13l-5-4-5 4z" stroke="#aaa" stroke-width="1.3" fill="none"/></svg>
<svg class="a" style="left:776px;top:123px" width="16" height="14"><path d="M15 7H2M7 2L2 7l5 5" stroke="#aaa" stroke-width="1.3" fill="none"/></svg>
<svg class="a" style="left:802px;top:123px" width="16" height="14"><path d="M1 7h13M9 2l5 5-5 5" stroke="#555" stroke-width="1.3" fill="none"/></svg>
<div class="t" style="left:833px;top:123px;font-size:13px;color:#e6c04a;font-family:'Liberation Mono',monospace;letter-spacing:-1.5px">{.}</div>
<div class="t" style="left:857px;top:123px;font-size:13px;color:#c8c8c8">app.json <span style="color:#aaa">›</span> ...</div>
<!-- code -->
<div class="a" style="left:1192px;top:140px;width:2px;height:500px;background:#3a3a3a"></div>
<div class="a" style="left:1197px;top:138px;width:5px;height:19px;background:#9a9a9a"></div>
<div class="a" style="left:1198px;top:376px;width:4px;height:20px;background:#777"></div>
<div class="a" style="left:811px;top:208px;width:1px;height:90px;background:#404040"></div>
<div class="a" style="left:811px;top:368px;width:1px;height:154px;background:#404040"></div>
<div class="a" style="left:794px;top:141px;width:9px;height:32px;border:1px solid #888"></div>
<div class="a" style="left:794px;top:589px;width:9px;height:32px;border:1px solid #888"></div>
<div class="a code" style="left:793px;top:143px;line-height:32px;white-space:pre"><span style="color:#e6c04a">{</span>
  <span class="b">"</span>pages<span class="b">"</span>: <span style="color:#c586c0">[</span>
    <span class="b">"</span><span class="s">pages/index/index</span><span class="b">"</span><span class="b">,</span>
    <span class="b">"</span><span class="s">pages/search/search</span><span class="b">"</span><span class="b">,</span>
    <span class="b">"</span><span class="s">pages/see-img/see-img</span><span class="b">"</span>
  <span style="color:#c586c0">]</span><span class="b">,</span>
  <span class="b">"</span>window<span class="b">"</span>: <span style="color:#c586c0">{</span>
    <span class="b">"</span>backgroundTextStyle<span class="b">"</span>: <span class="b">"</span><span class="s">light</span><span class="b">"</span><span class="b">,</span>
    <span class="b">"</span>navigationBarBackgroundColor<span class="b">"</span>: <span class="b">"</span><span class="s">#fff</span><span class="b">"</span><span class="b">,</span>
    <span class="b">"</span>navigationBarTitleText<span class="b">"</span>: <span class="b">"</span><span class="s">WeChat</span><span class="b">"</span><span class="b">,</span>
    <span class="b">"</span>navigationBarTextStyle<span class="b">"</span>: <span class="b">"</span><span class="s">black</span><span class="b">"</span><span class="b">,</span>
    <span class="b">"</span>navigationStyle<span class="b">"</span>: <span class="b">"</span><span class="s">custom</span><span class="b">"</span>
  <span style="color:#c586c0">}</span><span class="b">,</span>
  <span class="b">"</span>sitemapLocation<span class="b">"</span>: <span class="b">"</span><span class="s">sitemap.json</span><span class="b">"</span>
<span style="color:#e6c04a">}</span></div>
<div class="a ln" style="left:738px;top:143px;line-height:32px;white-space:pre">1
2
3
4
5
6
7
8
9
10
11
12
13
14
15</div>
<svg class="a" style="left:774px;top:144px" width="12" height="8"><path d="M1 1l5 5 5-5" stroke="#bbb" stroke-width="1.4" fill="none"/></svg>
<svg class="a" style="left:774px;top:176px" width="12" height="8"><path d="M1 1l5 5 5-5" stroke="#bbb" stroke-width="1.4" fill="none"/></svg>
<svg class="a" style="left:774px;top:336px" width="12" height="8"><path d="M1 1l5 5 5-5" stroke="#bbb" stroke-width="1.4" fill="none"/></svg>

<!-- debug panel -->
<div class="a" style="left:711px;top:640px;width:491px;height:1px;background:#333"></div><div class="a" style="left:711px;top:645px;width:491px;height:30px;background:#333;border-top:1px solid #3a3a3a"></div><div class="a" style="left:711px;top:675px;width:491px;height:2px;background:#282828"></div>
<div class="a" style="left:711px;top:677px;width:491px;height:22px;background:#2c2c30"></div><div class="a" style="left:711px;top:699px;width:491px;height:2px;background:#262626"></div>
<div class="a" style="left:711px;top:702px;width:491px;height:178px;background:#252525"></div>
<div class="a" style="left:711px;top:641px;width:491px;height:4px;background:#272727"></div>
<div class="t" style="left:728px;top:656px;font-size:12px;color:#eee"><i class="c">调</i><i class="c">试</i><i class="c">器</i></div>
<div class="a" style="left:728px;top:674px;width:34px;height:2px;background:#ddd"></div>
<div class="a" style="left:769px;top:653px;width:18px;height:18px;border-radius:9px;background:#4a4a4a"></div>
<div class="t" style="left:775px;top:657px;font-size:11px;color:#ddd">8</div>
<div class="t" style="left:807px;top:656px;font-size:12px;color:#aaa"><i class="c">问</i><i class="c">题</i></div>
<div class="t" style="left:849px;top:656px;font-size:12px;color:#aaa"><i class="c">输</i><i class="c">出</i></div>
<div class="t" style="left:891px;top:656px;font-size:12px;color:#aaa"><i class="c">终</i><i class="c">端</i></div>
<div class="t" style="left:934px;top:656px;font-size:12px;color:#aaa"><i class="c">代</i><i class="c">码</i><i class="c">质</i><i class="c">量</i></div>
<svg class="a" style="left:1143px;top:657px" width="14" height="10"><path d="M1 8l6-6 6 6" stroke="#bbb" stroke-width="1.4" fill="none"/></svg>
<svg class="a" style="left:1176px;top:657px" width="12" height="12"><path d="M1 1l10 10M11 1L1 11" stroke="#ccc" stroke-width="1.4"/></svg>
<div class="a" style="left:711px;top:701px;width:491px;height:1px;background:#3a3a3a"></div>
<svg class="a" style="left:718px;top:682px" width="16" height="15"><path d="M6 12H1.5V1.5h11V6" stroke="#aaa" stroke-width="1.2" fill="none"/><path d="M7 6l7 3-3 1-1 3z" fill="#ccc"/></svg>
<div class="a" style="left:743px;top:680px;width:1px;height:18px;background:#3c3c3c"></div>
<div class="t" style="left:761px;top:683px;font-size:13px;color:#ddd">Wxml</div>
<div class="t" style="left:815px;top:683px;font-size:13px;color:#ddd;letter-spacing:-0.4px">Console</div>
<div class="t" style="left:881px;top:683px;font-size:13px;color:#ddd;letter-spacing:-0.5px">Sources</div>
<div class="a" style="left:935px;top:677px;width:57px;height:25px;background:#000"></div>
<div class="t" style="left:946px;top:683px;font-size:13px;color:#f0f0f0">Audits</div>
<div class="t" style="left:1000px;top:680px;font-size:15px;color:#bbb">»</div>
<svg class="a" style="left:1086px;top:683px" width="12" height="11"><path d="M6 0.5L11.5 10.5H0.5z" fill="#e8d66a"/></svg>
<div class="t" style="left:1100px;top:683px;font-size:13px;color:#eee">8</div>
<div class="a" style="left:1117px;top:680px;width:1px;height:18px;background:#3c3c3c"></div>
<svg class="a" style="left:1128px;top:681px" width="16" height="16" viewBox="0 0 16 16"><path d="M8 1l1.2 1.6 2-.6.4 2 2 .6-.6 2L14.6 8l-1.6 1.2.6 2-2 .4-.6 2-2-.6L8 14.6l-1.2-1.6-2 .6-.4-2-2-.6.6-2L1.4 8 3 6.8l-.6-2 2-.4.6-2 2 .6z" fill="#bbb"/><circle cx="8" cy="8" r="2.4" fill="#2e2e2e"/></svg>
<svg class="a" style="left:1161px;top:681px" width="6" height="16"><circle cx="3" cy="2.5" r="1.5" fill="#bbb"/><circle cx="3" cy="8" r="1.5" fill="#bbb"/><circle cx="3" cy="13.5" r="1.5" fill="#bbb"/></svg>
<svg class="a" style="left:1184px;top:681px" width="18" height="16"><rect x="4.5" y="1.5" width="13" height="10" stroke="#aaa" stroke-width="1.3" fill="none"/><path d="M1.5 4.5v10h13" stroke="#aaa" stroke-width="1.3" fill="none"/></svg>
<div class="t" style="left:744px;top:743px;font-size:16.5px;color:#f0f0f0"><i class="c">体</i><i class="c">验</i><i class="c">评</i><i class="c">分</i></div>
<div class="t" style="left:744px;top:779px;font-size:13px;color:#fafafa;-webkit-text-stroke:0.12px #fafafa"><i class="c">请</i><i class="c">自</i><i class="c">行</i><i class="c">操</i><i class="c">作</i><i class="c">小</i><i class="c">程</i><i class="c">序</i><i class="c p">，</i><i class="c">尽</i><i class="c">可</i><i class="c">能</i><i class="c">的</i><i class="c">覆</i><i class="c">盖</i><i class="c">到</i><i class="c">所</i><i class="c">有</i><i class="c">页</i><i class="c">面</i><i class="c p">，</i><i class="c">以</i><i class="c">及</i><i class="c">触</i><i class="c">发</i><i class="c">各</i><i class="c">个</i><i class="c">页</i><i class="c">面</i><i class="c">的</i><i class="c">各</i><i class="c">种</i></div>
<div class="t" style="left:744px;top:799px;font-size:13px;color:#fafafa;-webkit-text-stroke:0.12px #fafafa"><i class="c">交</i><i class="c">互</i><i class="c">使</i><i class="c">得</i><i class="c">体</i><i class="c">验</i><i class="c">评</i><i class="c">分</i><i class="c">的</i><i class="c">检</i><i class="c">查</i><i class="c">更</i><i class="c">加</i><i class="c">全</i><i class="c">面</i><i class="c p">。</i></div>
<div class="t" style="left:744px;top:843px;font-size:13px;color:#777"><i class="c">当</i><i class="c">前</i><i class="c">页</i><i class="c">面</i><i class="c p">：</i>pages/index/index</div>
<div class="t" style="left:744px;top:863px;font-size:13px;color:#777"><i class="c">已</i><i class="c">覆</i><i class="c">盖</i><i class="c">页</i><i class="c">面</i><i class="c">数</i><i class="c p">：</i>1/3</div>

<script>(function(){var d=document.createElement("span");d.style.cssText="position:absolute;left:0;top:0;font-family:'Liberation Sans';font-size:100px;visibility:hidden;white-space:nowrap";d.textContent="\u9879\u76ee\u9879\u76ee";document.body.appendChild(d);var w=d.getBoundingClientRect().width;d.parentNode.removeChild(d);if(w<370)document.documentElement.className+=" nocjk";})();</script></body></html>
